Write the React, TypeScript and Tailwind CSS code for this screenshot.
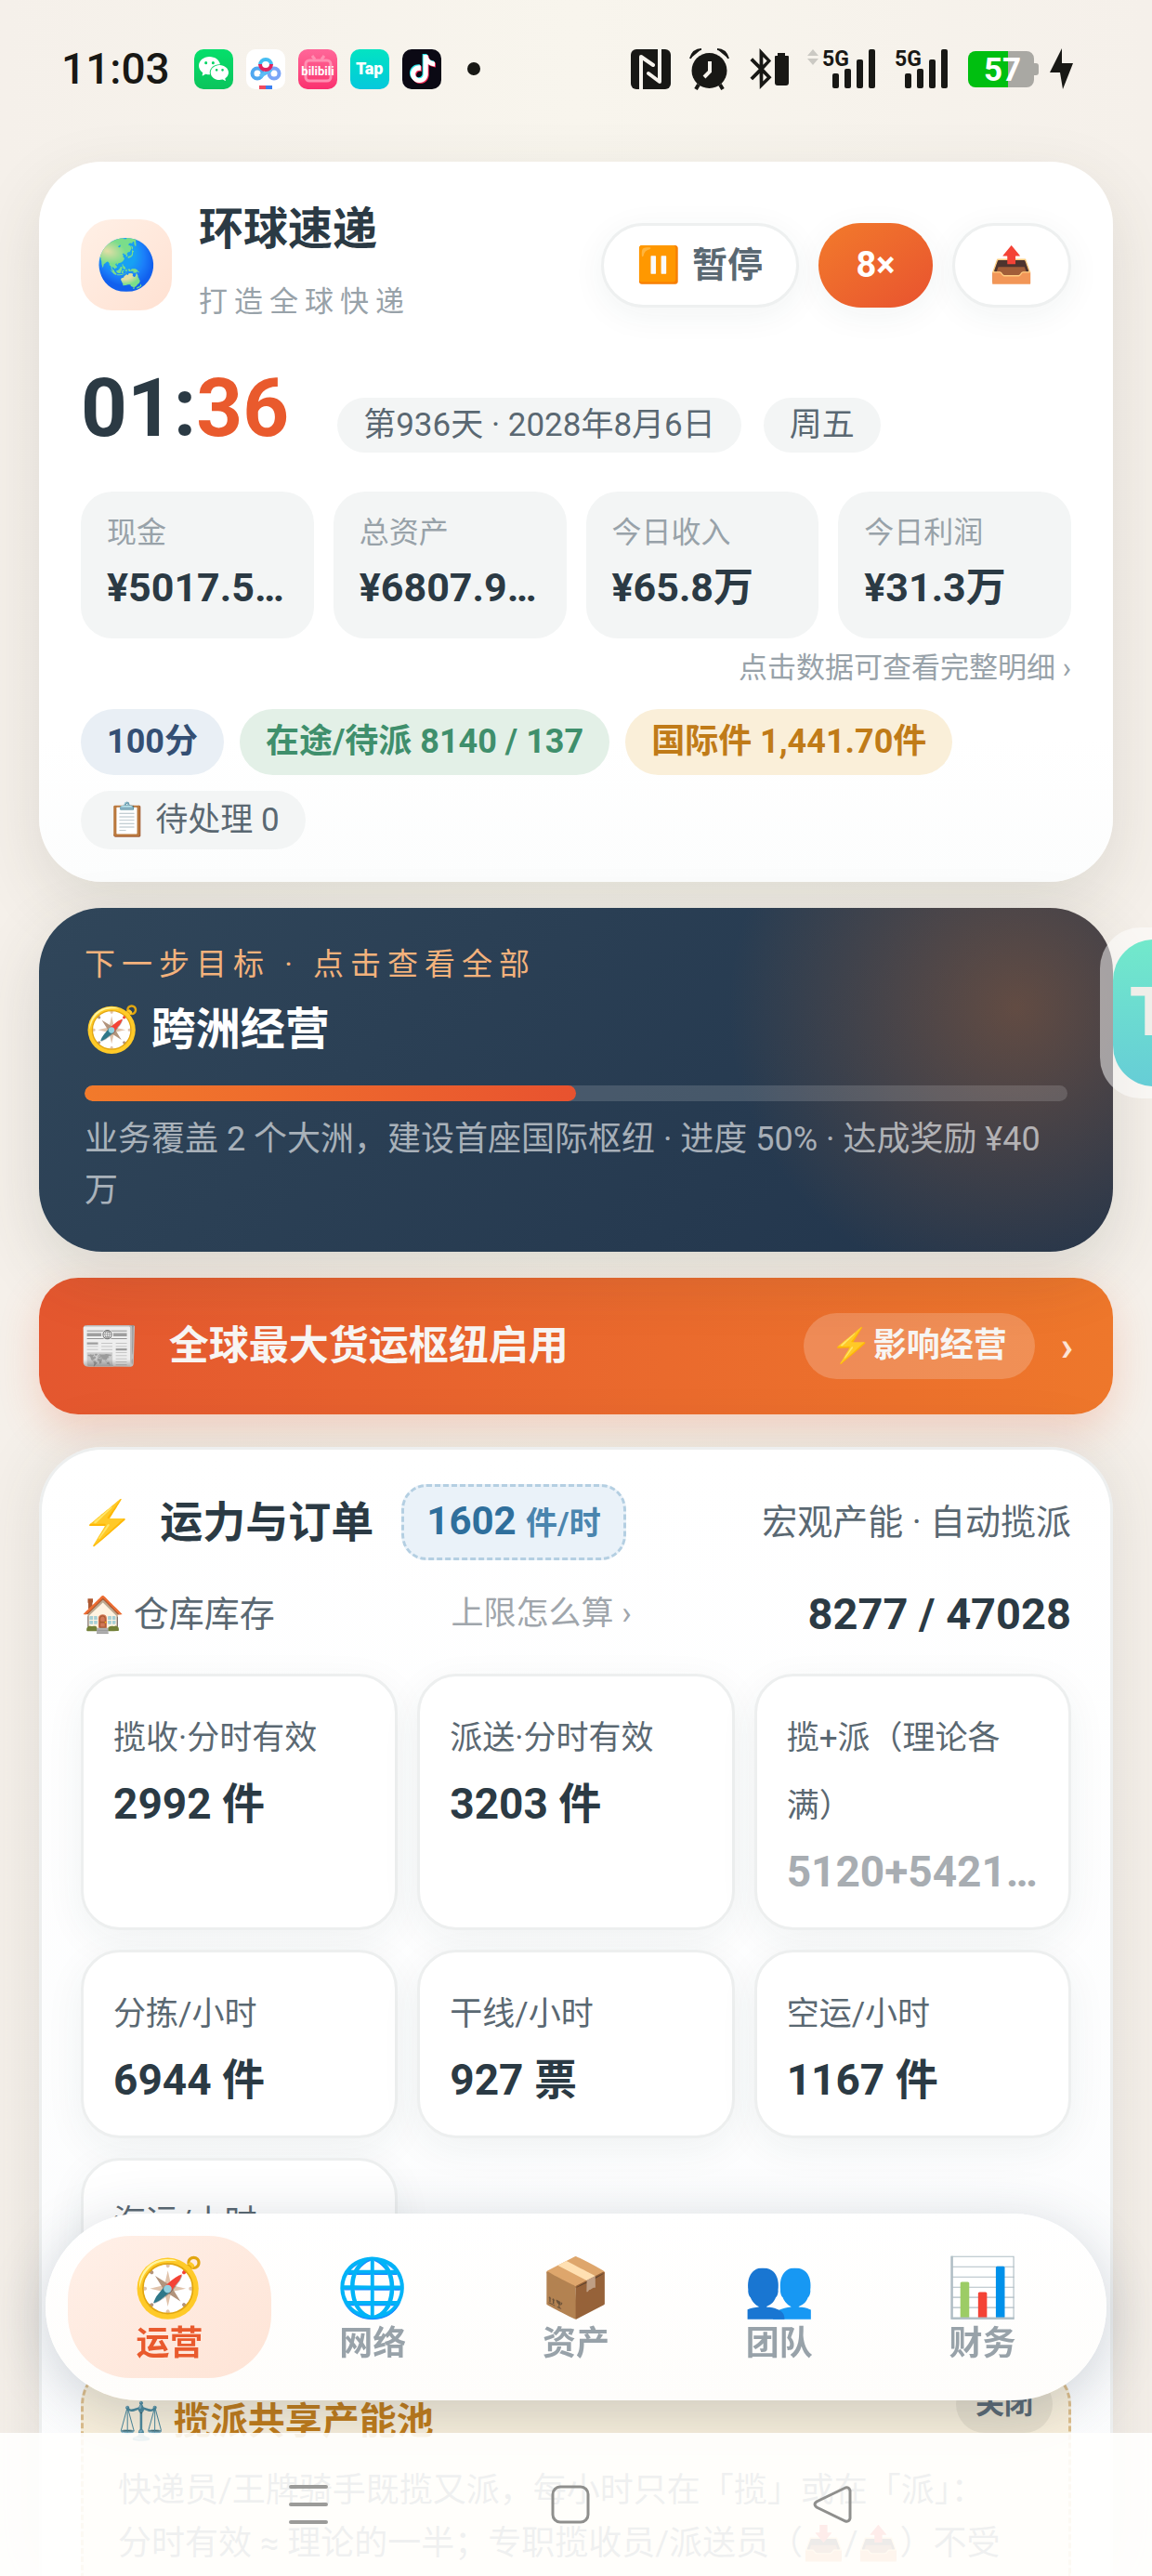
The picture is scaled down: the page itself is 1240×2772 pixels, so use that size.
import type { ReactNode } from 'react'
import { FaBluetoothB } from 'react-icons/fa'
import { IoLogoWechat } from 'react-icons/io5'
import { SiTiktok } from 'react-icons/si'

const stats = [
  { label: '现金', value: '¥5017.5…' },
  { label: '总资产', value: '¥6807.9…' },
  { label: '今日收入', value: '¥65.8万' },
  { label: '今日利润', value: '¥31.3万' },
]

const capacity = [
  { label: '揽收·分时有效', value: '2992 件' },
  { label: '派送·分时有效', value: '3203 件' },
  { label: '揽+派（理论各满）', value: '5120+5421…', muted: true },
  { label: '分拣/小时', value: '6944 件' },
  { label: '干线/小时', value: '927 票' },
  { label: '空运/小时', value: '1167 件' },
  { label: '海运/小时', value: '' },
]

const tabs = [
  { icon: '🧭', label: '运营', active: true },
  { icon: '🌐', label: '网络' },
  { icon: '📦', label: '资产' },
  { icon: '👥', label: '团队' },
  { icon: '📊', label: '财务' },
]

function AppIcon({ className, children }: { className: string; children: ReactNode }) {
  return (
    <div className={`flex h-[43px] w-[42px] items-center justify-center overflow-hidden rounded-[10px] ${className}`}>
      {children}
    </div>
  )
}

function Signal({ arrows }: { arrows?: boolean }) {
  return (
    <div className="flex items-start">
      {arrows && (
        <svg className="h-[44px] w-4" viewBox="0 0 16 44" fill="#cbc9c3">
          <path d="M6 1l6 7H0zM6 18l6-7H0z" />
        </svg>
      )}
      <svg className="h-[44px] w-[58px] overflow-visible" viewBox="0 0 58 44" fill="#181815">
        <text x="0" y="19" fontSize="23" fontWeight="700" fontFamily="Roboto, sans-serif">5G</text>
        <rect x="11" y="27" width="7" height="16" rx="2" />
        <rect x="24" y="22" width="7" height="21" rx="2" />
        <rect x="37" y="12" width="7" height="31" rx="2" />
        <rect x="50" y="1" width="7" height="42" rx="2" />
      </svg>
    </div>
  )
}

function StatusBar() {
  return (
    <header className="flex h-[148px] items-center justify-between pl-[66px] pr-[85px] text-[#181815]">
      <div className="flex items-center gap-[14px]">
        <span className="pr-3 text-[46px] font-medium leading-none">11:03</span>
        <AppIcon className="bg-gradient-to-b from-[#05df6b] to-[#0bc45c]">
          <IoLogoWechat className="h-8 w-8 text-white" />
        </AppIcon>
        <AppIcon className="bg-white">
          <svg className="h-full w-full" viewBox="0 0 42 43" fill="none" strokeWidth="4">
            <circle cx="12" cy="26" r="5.5" stroke="#4fa8f0" />
            <circle cx="30" cy="26" r="5.5" stroke="#7ba5f7" />
            <path d="M15 29L27 22" stroke="#5cbcf5" />
            <path d="M15 17a6 6 0 1 1 12 0" stroke="#45bdf2" />
            <path d="M15 16a6 6 0 0 0 12 0" stroke="#e0245e" />
            <path d="M14 41h7" stroke="#f04a5d" />
            <path d="M21 41h7" stroke="#3a7ff0" />
          </svg>
        </AppIcon>
        <AppIcon className="bg-gradient-to-b from-[#ff6699] to-[#fa2f6f]">
          <svg className="h-full w-full" viewBox="0 0 42 43" fill="none">
            <rect x="8" y="12" width="27" height="22" rx="4" stroke="#ff8fb2" strokeWidth="3" />
            <path d="M15 7l3 4M28 7l-3 4" stroke="#ff8fb2" strokeWidth="3" />
            <text x="21" y="28" textAnchor="middle" fontSize="13" fontWeight="700" fill="#fff" fontFamily="Roboto, sans-serif">bilibili</text>
          </svg>
        </AppIcon>
        <AppIcon className="bg-gradient-to-b from-[#04e3c2] to-[#07c8dc]">
          <span className="text-[18px] font-black leading-none text-white">Tap</span>
        </AppIcon>
        <AppIcon className="bg-[#0b0914]">
          <svg className="h-full w-full" viewBox="0 0 42 43">
            <SiTiktok x="6" y="5" size="30" color="#28e5ea" />
            <SiTiktok x="8" y="7" size="30" color="#f52b56" />
            <SiTiktok x="7" y="6" size="30" color="#fff" />
          </svg>
        </AppIcon>
        <span className="ml-[14px] h-[14px] w-[14px] rounded-full bg-[#181815]" />
      </div>

      <div className="flex items-center gap-5">
        <svg className="h-[43px] w-[43px]" viewBox="0 0 43 43">
          <rect width="43" height="43" rx="6" fill="#181815" />
          <path d="M11 43V8l13 9M31 0v35L19 26" fill="none" stroke="#f7f4ed" strokeWidth="4" strokeLinejoin="round" strokeLinecap="round" />
        </svg>
        <svg className="h-[45px] w-[43px]" viewBox="0 0 43 45">
          <circle cx="21.500" cy="24" r="19" fill="#181815" />
          <path d="M1 11Q4 1 13 1M42 11Q39 1 30 1" fill="#181815" stroke="#181815" strokeWidth="2" />
          <path d="M10 39l-3 5M33 39l3 5" stroke="#181815" strokeWidth="4" />
          <path d="M22 14v11l-6 6" fill="none" stroke="#f7f4ed" strokeWidth="4" />
        </svg>
        <div className="flex items-center">
          <FaBluetoothB className="h-[44px] w-[28px]" />
          <svg className="h-[35px] w-4" viewBox="0 0 16 35" fill="#181815">
            <path d="M4 0h8v3h3a1 1 0 0 1 1 1v28a3 3 0 0 1-3 3H4a3 3 0 0 1-3-3V4a1 1 0 0 1 1-1h2z" />
          </svg>
        </div>
        <Signal arrows />
        <Signal />
        <div className="flex items-center gap-3">
          <svg className="h-[41px] w-[77px]" viewBox="0 0 77 41">
            <path d="M44 1h20a8 8 0 0 1 8 8v5h2a3 3 0 0 1 3 3v7a3 3 0 0 1-3 3h-2v5a8 8 0 0 1-8 8H44z" fill="#a9a8a3" />
            <path d="M44 1H9a8 8 0 0 0-8 8v23a8 8 0 0 0 8 8h35z" fill="#00bf10" />
            <text x="38" y="33" textAnchor="middle" fontSize="35" fontWeight="700" fill="#fff" fontFamily="Roboto, sans-serif">57</text>
          </svg>
          <svg className="h-[44px] w-[25px]" viewBox="0 0 25 44" fill="#181815">
            <path d="M13 0L0 26h11l3 18 11-28H13z" />
          </svg>
        </div>
      </div>
    </header>
  )
}

function CompanyCard() {
  return (
    <section className="rounded-[68px] bg-gradient-to-b from-white from-80% to-[#fcfdfd] px-[45px] pb-[35px] pt-[33px] shadow-[0_24px_70px_rgba(60,60,50,0.13)]">
      <div className="flex items-center justify-between">
        <div className="flex items-center gap-[29px]">
          <div className="flex h-[98px] w-[98px] items-center justify-center rounded-[34px] bg-gradient-to-br from-[#fff0e6] to-[#ffe1d2] text-[53px] leading-none">
            🌏
          </div>
          <div>
            <h1 className="text-[48px] font-bold leading-[80px]">环球速递</h1>
            <p className="text-[31px] leading-[76px] tracking-[7px] text-[#98a2a9]">打造全球快递</p>
          </div>
        </div>
        <div className="flex gap-[21px] text-[38px] font-bold">
          <button className="flex h-[91px] items-center gap-3 rounded-full border-[3px] border-[#eef0f0] bg-white px-9 text-[#5a6872] shadow-[0_8px_36px_rgba(40,60,70,0.06)]">
            <span>⏸️</span>
            暂停
          </button>
          <button className="h-[91px] w-[123px] rounded-full bg-gradient-to-br from-[#f27a2b] to-[#e8522f] text-white shadow-[0_8px_36px_rgba(40,60,70,0.06)]">
            8×
          </button>
          <button className="h-[91px] w-[128px] rounded-full border-[3px] border-[#eef0f0] bg-white shadow-[0_8px_36px_rgba(40,60,70,0.06)]">
            📤
          </button>
        </div>
      </div>

      <div className="flex items-baseline pt-6">
        <div className="text-[87px] font-bold leading-[104px]">
          01:<span className="text-[#e95a2d]">36</span>
        </div>
        <div className="ml-[52px] flex gap-6 text-[35px] leading-[59px] text-[#5a6872]">
          <span className="rounded-full bg-[#f3f5f5] px-7">第936天 · 2028年8月6日</span>
          <span className="rounded-full bg-[#f3f5f5] px-7">周五</span>
        </div>
      </div>

      <div className="mt-[38px] grid grid-cols-4 gap-[21px]">
        {stats.map((s) => (
          <button key={s.label} className="rounded-[34px] bg-[#f3f5f5] px-7 pb-6 pt-4 text-left">
            <div className="text-[32px] leading-[56px] text-[#98a2a9]">{s.label}</div>
            <div className="whitespace-nowrap text-[43px] font-bold leading-[62px]">{s.value}</div>
          </button>
        ))}
      </div>
      <p className="pb-3 text-right text-[31px] leading-[64px] text-[#98a2a9]">点击数据可查看完整明细 ›</p>

      <div className="flex flex-wrap gap-[17px] text-[36px] font-bold leading-[71px]">
        <span className="rounded-full bg-[#e9eff5] px-7 text-[#344f74]">100分</span>
        <span className="rounded-full bg-[#e3f0e7] px-7 text-[#3f8f6c]">在途/待派 8140 / 137</span>
        <span className="rounded-full bg-[#faefd9] px-7 text-[#c07b18]">国际件 1,441.70件</span>
        <span className="rounded-full bg-[#f3f5f5] px-7 text-[35px] font-normal leading-[63px] text-[#5a6872]">
          📋 待处理 0
        </span>
      </div>
    </section>
  )
}

function GoalCard() {
  return (
    <section className="relative z-10 rounded-[68px] bg-[radial-gradient(circle_at_91%_29%,rgba(240,120,40,0.3),transparent_310px),linear-gradient(135deg,#30465a,#21344b)] px-[49px] pb-[38px] pt-[31px] shadow-[0_24px_70px_rgba(60,60,50,0.16)]">
      <p className="text-[33px] leading-[60px] tracking-[7px] text-[#f3b27c]">下一步目标 · 点击查看全部</p>
      <h2 className="text-[48px] font-bold leading-[80px] text-white">🧭 跨洲经营</h2>
      <div className="mt-5 h-[17px] overflow-hidden rounded-full bg-white/15">
        <div className="h-full w-1/2 rounded-full bg-gradient-to-r from-[#f27a2b] to-[#e8522f]" />
      </div>
      <p className="mt-[14px] text-[36px] leading-[55px] text-white/60">
        业务覆盖 2 个大洲，建设首座国际枢纽 · 进度 50% · 达成奖励 ¥40万
      </p>
    </section>
  )
}

function NewsBanner() {
  return (
    <button className="flex h-[147px] w-full items-center rounded-[42px] bg-gradient-to-r from-[#e4572f] to-[#ee772b] px-[43px] text-left text-white shadow-[0_16px_44px_rgba(233,90,45,0.22)]">
      <span className="text-[52px] leading-none">📰</span>
      <span className="ml-8 flex-1 text-[43px] font-bold text-[#f7f5f3]">全球最大货运枢纽启用</span>
      <span className="rounded-full bg-white/20 px-[30px] text-[36px] font-bold leading-[71px] text-[#f7f5f3]">⚡影响经营</span>
      <span className="ml-7 text-[44px] font-bold text-white/80">›</span>
    </button>
  )
}

function CapacityCard() {
  return (
    <section className="flex flex-1 flex-col rounded-t-[68px] border-[3px] border-b-0 border-[#edefef] bg-gradient-to-b from-white to-[#fbfcfd] px-[42px] pt-[37px] shadow-[0_0_70px_rgba(60,60,50,0.12)]">
      <div className="flex items-center">
        <span className="text-[46px] leading-none">⚡</span>
        <h2 className="ml-7 text-[46px] font-bold leading-[79px]">运力与订单</h2>
        <button className="ml-[30px] rounded-[27px] border-[3px] border-dashed border-[#b4cfe2] bg-[#eaf2f9] px-6 text-[42px] font-bold leading-[73px] text-[#2f6f9c]">
          1602 <span className="text-[34px] text-[#4a85ae]">件/时</span>
        </button>
        <span className="ml-auto text-[38px] text-[#5a6872]">宏观产能 · 自动揽派</span>
      </div>
      <div className="mt-[22px] flex items-center justify-between leading-[72px]">
        <span className="text-[38px] text-[#5a6872]">🏠 仓库库存</span>
        <a href="#limit" className="text-[35px] text-[#a0a6ac]">上限怎么算 ›</a>
        <span className="text-[47px] font-bold">8277 / 47028</span>
      </div>

      <div className="mt-7 grid grid-cols-3 gap-[21px]">
        {capacity.map((c) => (
          <div
            key={c.label}
            className="rounded-[42px] border-[3px] border-[#edefef] bg-white px-8 pb-[26px] pt-[30px] shadow-[0_12px_44px_rgba(40,60,70,0.06)]"
          >
            <div className="text-[35px] leading-[73px] text-[#5a6872]">{c.label}</div>
            <div className={`min-h-[68px] whitespace-nowrap text-[46px] font-bold leading-[68px] ${c.muted ? 'text-[#a8adb2]' : ''}`}>
              {c.value}
            </div>
          </div>
        ))}
      </div>

      <div className="relative mt-5 flex-1 rounded-t-[42px] border-[3px] border-b-0 border-dashed border-[#dcbd8b] bg-[#f8efdb] px-[37px] pt-[26px]">
        <button className="absolute right-[17px] top-2 rounded-full bg-[#e8e0cd] px-[21px] text-[31px] font-bold leading-[62px] text-[#5a6872]">
          关闭
        </button>
        <h3 className="text-[40px] font-bold leading-[64px] text-[#c07b18]">⚖️ 揽派共享产能池</h3>
        <p className="mt-[14px] text-[36px] leading-[57px] text-[#5a6872]">
          快递员/王牌骑手既揽又派，每小时只在「揽」或在「派」：
          <br />
          分时有效 ≈ 理论的一半；专职揽收员/派送员（📥/📤）不受
        </p>
      </div>
    </section>
  )
}

function TabBar() {
  return (
    <nav className="fixed inset-x-[49px] bottom-[189px] z-20 flex rounded-full bg-gradient-to-b from-white to-[#fefdfb] px-6 py-6 shadow-[0_12px_60px_rgba(40,60,80,0.22)]">
      {tabs.map((t) => (
        <button
          key={t.label}
          className={`flex h-[153px] flex-1 flex-col items-center rounded-[68px] pt-[18px] ${
            t.active ? 'bg-gradient-to-br from-[#fff0e8] to-[#fee4d6] text-[#e95a2d]' : 'text-[#98a2a9]'
          }`}
        >
          <span className="text-[62px] leading-[76px]">{t.icon}</span>
          <span className="text-[36px] font-bold leading-[44px]">{t.label}</span>
        </button>
      ))}
    </nav>
  )
}

function SystemNav() {
  return (
    <footer className="fixed inset-x-0 bottom-0 z-30 flex h-[154px] items-center justify-center gap-[240px] bg-[#fffffe]/90 pr-3">
      <button aria-label="菜单">
        <svg className="h-[42px] w-[42px]" viewBox="0 0 42 42" stroke="#9b9b99" strokeWidth="4" strokeLinecap="round">
          <path d="M2 2h38M2 21h38M2 40h38" />
        </svg>
      </button>
      <button aria-label="主页">
        <svg className="h-[42px] w-[42px]" viewBox="0 0 42 42" fill="none" stroke="#8f8f8d" strokeWidth="3">
          <rect x="2" y="2" width="38" height="38" rx="8" />
        </svg>
      </button>
      <button aria-label="返回">
        <svg className="h-[42px] w-[42px]" viewBox="0 0 42 42" fill="none" stroke="#8f8f8d" strokeWidth="3">
          <path d="M35 3L4 18q-4 3 0 6l31 15q4 1 5-3V6q-1-4-5-3z" />
        </svg>
      </button>
    </footer>
  )
}

function FloatingTap() {
  return (
    <div className="absolute right-0 top-[998px] z-20 h-[184px] w-14 overflow-hidden rounded-l-[44px] bg-white/50">
      <div className="ml-[14px] mt-[13px] flex h-[158px] w-[158px] items-center rounded-[44px] bg-gradient-to-b from-[#72e9cb] to-[#66cdd6] pl-[18px] text-[72px] font-black text-[#efeee9]">
        Tap
      </div>
    </div>
  )
}

export default function App() {
  return (
    <div className="relative flex min-h-screen flex-col overflow-x-hidden bg-gradient-to-r from-[#f5f0ea] via-[#f8f5ed] to-[#f5f0ea] font-['Roboto','Noto_Sans_CJK_SC','Noto_Color_Emoji',sans-serif] text-[#2b3a44]">
      <StatusBar />
      <main className="flex flex-1 flex-col px-[42px] pt-[26px]">
        <CompanyCard />
        <div className="pt-7">
          <GoalCard />
        </div>
        <div className="pb-[35px] pt-7">
          <NewsBanner />
        </div>
        <CapacityCard />
      </main>
      <FloatingTap />
      <TabBar />
      <SystemNav />
    </div>
  )
}
